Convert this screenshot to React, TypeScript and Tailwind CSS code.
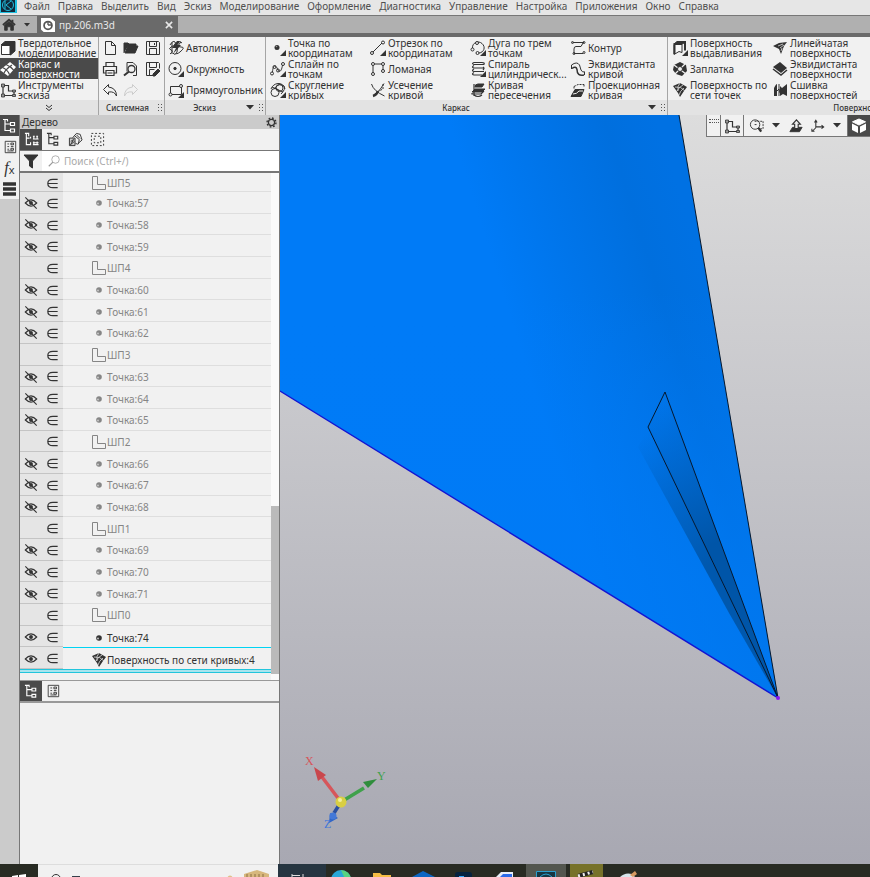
import type { ReactNode } from "react";

const menu = [
  "Файл", "Правка", "Выделить", "Вид", "Эскиз", "Моделирование", "Оформление",
  "Диагностика", "Управление", "Настройка", "Приложения", "Окно", "Справка",
];

function Icon({ children, size = 16, className = "" }: { children: ReactNode; size?: number; className?: string }) {
  return (
    <svg width={size} height={size} viewBox="0 0 16 16" fill="none" stroke="currentColor" strokeWidth="1" className={`shrink-0 ${className}`} aria-hidden="true">
      {children}
    </svg>
  );
}

const corner = <path d="M16 10v6h-6z" fill="currentColor" stroke="none" />;
const caret = (
  <svg width="9" height="5" viewBox="0 0 9 5" className="shrink-0" aria-hidden="true">
    <path d="M0 0h8L4 4.500z" fill="#333" />
  </svg>
);

const icons: Record<string, ReactNode> = {
  solid: (
    <>
      <path d="M1.500 5.500h8.500v9H1.500z" fill="#fff" />
      <path d="M1 5l4-3.500h10L11 5zM10.500 5l4.500-3.500V11l-4.500 4z" fill="currentColor" />
    </>
  ),
  frame: (
    <>
      <path d="M10 1l6 5-8 9-8-6z" fill="currentColor" stroke="none" />
      <path d="M6 3.500q5 2 8 6M2.500 6.500q5 2 7 7M4 12q2-4 8-8" stroke="#4a4a4a" strokeWidth="1.200" />
    </>
  ),
  sketch: (
    <>
      <path d="M3 3v10.500h11V9H8.500V3.500H3" strokeWidth="1.200" />
      <path d="M1.500 2h3v3h-3zM1.500 12h3v3h-3zM12.500 8h3v2h-3zM12.500 12.500h3v2h-3z" fill="#999" strokeWidth=".8" />
    </>
  ),
  auto: (
    <>
      <path d="M2 5q3-5 5-3T3 7q-3 2 0 3t-1 4M13 2q-5 5 0 5t-1 5q-4 3-4 1M4 2v12" />
      <path d="M5 13q2 3 4-1l1-9q2-3 4 0" />
      <path d="M9 1L4 8h4l-3 6 8-9H9l3-4z" fill="currentColor" stroke="none" />
    </>
  ),
  circle: (
    <>
      <circle cx="7" cy="7.500" r="6" />
      <circle cx="7" cy="7.500" r="1.200" fill="currentColor" />
      {corner}
    </>
  ),
  rect: (
    <>
      <path d="M2.500 4.500h11v8h-11z" />
      <circle cx="2.500" cy="12.500" r="1.500" fill="#f1f1f1" />
      <circle cx="13" cy="4" r="1.500" fill="#f1f1f1" />
      {corner}
    </>
  ),
  point: (
    <>
      <circle cx="7" cy="7.500" r="2.500" fill="currentColor" stroke="none" />
      <circle cx="6.500" cy="6.500" r=".8" fill="#999" stroke="none" />
      {corner}
    </>
  ),
  segment: (
    <>
      <path d="M3 12L12 3" />
      <circle cx="2" cy="13" r="1.500" />
      <circle cx="13" cy="2.500" r="1.500" />
      {corner}
    </>
  ),
  arc: (
    <>
      <path d="M2.500 8C2 3 8 0 12 3.500s2 9-3 9.500" />
      <circle cx="2.500" cy="9.500" r="1.500" />
      <circle cx="7" cy="3" r="1.500" fill="#f1f1f1" />
      <circle cx="7.500" cy="13" r="1.500" />
      {corner}
    </>
  ),
  spline: (
    <>
      <path d="M2.500 11C3 3 6 4 7.500 8s4 3 5-4" />
      <circle cx="2" cy="12.500" r="1.500" />
      <circle cx="4.500" cy="6" r="1.500" />
      <circle cx="8" cy="9.500" r="1.500" />
      <circle cx="13" cy="3" r="1.500" />
      {corner}
    </>
  ),
  poly: (
    <>
      <path d="M3 12V3h10v6" />
      <circle cx="3" cy="13" r="1.500" />
      <circle cx="3" cy="3" r="1.500" fill="#f1f1f1" />
      <circle cx="13" cy="3" r="1.500" fill="#f1f1f1" />
      <circle cx="13" cy="10" r="1.500" />
    </>
  ),
  helix: (
    <>
      <path d="M14 3.500H4q-3-1 0-2h8q3 0 2 2M14 7H4q-3-1 0-2.500M14 10.500H4q-3-1 0-2.500M12 14H4q-3-1 0-2.500M13 6q2 1 0 3" strokeWidth="1.200" />
      {corner}
    </>
  ),
  fillet: (
    <>
      <path d="M1 7q2-5 7-5.500T15 7M4 7q5-7 10-3 2 3-3 8M2 5l11 5" />
      <circle cx="5" cy="10.500" r="4" />
      <circle cx="9.500" cy="6" r="3.500" />
      {corner}
    </>
  ),
  trim: (
    <>
      <path d="M1.500 2q2 7 13 12M14 1.500Q11 8 4 13" />
      <path d="M3 14q4-1 5-5" strokeWidth="2.500" />
      <path d="M13 2v5l-4 2" strokeDasharray="2 1" />
    </>
  ),
  intersect: (
    <>
      <path d="M5 5q0-3 3-3h6l-2 3zM2 10l3-3h10l-3 3z" fill="currentColor" />
      <path d="M2 11v1h9l3-3M4 13q4 3 8 0M4 2v12" strokeWidth="1.200" />
    </>
  ),
  contour: (
    <>
      <path d="M14 2.500H2.500M13 3l-2 3.500H6q-2 0-2 2.500v4.500h9" />
      <circle cx="2.500" cy="2.500" r="1" />
      <circle cx="14" cy="2.500" r="1" />
      <circle cx="4" cy="13.500" r="1" />
      <circle cx="14" cy="12.500" r="1" />
    </>
  ),
  offset: (
    <>
      <path d="M1.500 4Q7 0 9.500 4L11 9q1 2.500 4 2" />
      <path d="M2 7.500q4-3 5 1 0 7 7 5.500" strokeWidth="1.500" />
      <path d="M1.500 4v4M14.500 11v3" />
    </>
  ),
  project: (
    <>
      <path d="M5 7.500h9l-3 7H1z" fill="currentColor" />
      <path d="M4 4.500l4-2h6M4 4.500v2M14 2.500v3" strokeDasharray="2 1" />
      <path d="M3 12q4 0 6-3h4" stroke="#eee" />
    </>
  ),
  extrude: (
    <>
      <path d="M2 4.500h8v8l-3-1-5 3z" fill="#f8f8f8" />
      <path d="M2 4l3-2.500h9L10.500 4z" fill="currentColor" />
      <path d="M2.500 3v11M13 2v8.500" strokeWidth="2" />
      {corner}
    </>
  ),
  patch: (
    <>
      <path d="M8 1l6 3 1 6-5 5-6-2-3-4 1-5z" fill="currentColor" stroke="none" />
      <path d="M2 4l12 9M13 3L3 13" stroke="#eee" strokeWidth="1.300" />
      <circle cx="8" cy="8" r="2.500" fill="#f1f1f1" />
    </>
  ),
  net: (
    <>
      <path d="M1 4l7-3 7 4-3 4-4 6-2-4z" fill="currentColor" stroke="none" />
      <path d="M3 5q6-1 10 4M5 9q2-4 6-6M7 13q1-4 5-7M8 1q-3 3-2 8" stroke="#ddd" strokeWidth=".8" />
    </>
  ),
  ruled: (
    <>
      <path d="M1 6l6-3 8-1-3 4-3 8-2-5z" fill="currentColor" stroke="none" />
      <path d="M6 6l5-2M8 8l4-3M9 11l1-3" stroke="#ddd" strokeWidth=".8" />
    </>
  ),
  eqsurf: (
    <>
      <path d="M1 6l7-5 7 6-6 5z" fill="currentColor" stroke="none" />
      <path d="M1 8l8 6 6-5" strokeWidth="1.500" />
    </>
  ),
  sew: (
    <>
      <path d="M8 4l2 2 5-4v12l-4-2-3 2zM2 6q2-4 3-4v12H2z" fill="currentColor" stroke="none" />
      <path d="M5 9l2-2 1 4M7 2v12" />
    </>
  ),
  file: <path d="M3.500 1.500h6l4 4v9h-10zM9.500 1.500v4h4" />,
  open: <path d="M1 13V3h4l1 1h7v2H5l-3 7h10l3-7H5" fill="currentColor" />,
  save: <path d="M1.500 1.500h12l1 1v12h-13zM4.500 1.500v5h7v-5M4.500 14.500v-6h7v6M9.500 3v2" />,
  print: <path d="M4 5.500v-4h8v4M4 12H1.500V5.500h13V12H12M4 9.500h8v5H4zM5.500 12h5" strokeWidth="1.200" />,
  preview: (
    <>
      <path d="M4 10.500v-9h6l3.500 3.500v9.500H10" />
      <circle cx="8.500" cy="8" r="3.500" fill="#f1f1f1" strokeWidth="1.300" />
      <path d="M6 10.500l-5 4" strokeWidth="2" />
    </>
  ),
  saveas: (
    <>
      <path d="M1.500 1.500h12l1 1v5M8 14.500H1.500v-13M4.500 1.500v5h7v-5M4.500 14.500v-6h5" />
      <path d="M8 13l5-5 2 2-5 5H8z" fill="currentColor" />
    </>
  ),
  undo: <path d="M6.500 2.500L1.500 7.500l5 5V10q6-1 8 4 0-8-8-9z" />,
  redo: <path d="M9.500 2.500l5 5-5 5V10q-6-1-8 4 0-8 8-9z" stroke="#ccc" />,
  tree: <path d="M3 1v12M1 1.500h5M3 6h5M3 12.500h5M8.500 4.500h4v3h-4zM8.500 11h4v3h-4zM5.500 2v1.500" strokeWidth="1.200" />,
  treeNum: <path d="M2.500 1v13M1 1.500h4v3M3 6.500h3M3 13.500h4M7 5v2M7 11v3M10.500 4v4M14 4v4M9.500 4.500h2M13 4.500h2M9.500 7.500h6M10.500 10v4M14 10v4M9.500 11.500h6M9.500 13.500h6" strokeWidth="1.200" />,
  list: <path d="M2.500 1.500h12v13h-12zM5 4.500h2M9 3.500h3v2H9zM5 7.500h2M9 7.500h3M5 10.500h2M9 9.500h3v2H9zM5 12.500h7" />,
  copyset: (
    <>
      <path d="M5 6l4-4.500 4 1 2 6-5 4.500-2-1M7 4l5 4-1 5M9 3l4 4" />
      <path d="M1.500 6.500h6v8h-6z" fill="#ccc" />
      <path d="M3 10l3-2M3 13l3-5M2 14l5-4" />
    </>
  ),
  dotted: (
    <>
      <path d="M1.500 1.500h13v13h-13z" strokeDasharray="2 2" />
      <path d="M4.500 4.500h7v7h-7z" strokeDasharray="2 2" />
    </>
  ),
  gear: (
    <>
      <circle cx="8" cy="8" r="4.500" strokeWidth="1.800" />
      <circle cx="8" cy="8" r="6.500" strokeWidth="2" strokeDasharray="2.500 2.600" />
    </>
  ),
  corner2: <path d="M1.500 1.500h5v8h8v5h-13z" />,
  elem: <path d="M13.500 3.500H8.500q-5.500 0-5.500 4.500t5.500 4.500h5M3 8h10.500" strokeWidth="1.300" />,
  eye: (
    <>
      <path d="M1.500 8q6.500-7 13 0-6.500 7-13 0z" strokeWidth="1.300" />
      <circle cx="8" cy="8" r="2.200" fill="currentColor" stroke="none" />
    </>
  ),
  eyeOff: (
    <>
      <path d="M1.500 8q6.500-7 13 0-6.500 7-13 0zM1.500 1.500l13 13" strokeWidth="1.300" />
      <circle cx="8" cy="8" r="2.200" fill="currentColor" stroke="none" />
    </>
  ),
  dot: (
    <>
      <circle cx="8" cy="8" r="2.800" fill="currentColor" stroke="none" />
      <circle cx="7" cy="8.500" r=".9" fill="#ccc" stroke="none" />
    </>
  ),
  zoomArea: (
    <>
      <circle cx="6.500" cy="7" r="5" />
      <path d="M10 10.500l3 4" strokeWidth="2.500" />
      <path d="M6 3.500h9v8h-4M6 7h3" strokeDasharray="2 1" />
    </>
  ),
  normal: (
    <>
      <path d="M4 9.500h11l-3 5H1z" fill="currentColor" />
      <path d="M6.500 11V6H4l4.500-5L13 6h-2.500v5z" fill="#eee" strokeWidth="1.300" />
    </>
  ),
  axes: <path d="M5.500 10V2M4 4l1.500-2.500L7 4M5.500 10l-4 4M1 11v3h3M5.500 9H14M12 7l2.500 2-2.500 2" strokeWidth="1.200" />,
  cube: (
    <>
      <path d="M8 1l6.500 2.800L8 7 1.500 3.800z" fill="currentColor" />
      <path d="M1 5.500l6 3v6.500l-6-3zM15 5.500l-6 3v6.500l6-3z" fill="currentColor" stroke="none" />
    </>
  ),
};

type Tool = { icon: string; text: string; active?: boolean };

const modes: Tool[] = [
  { icon: "solid", text: "Твердотельное моделирование" },
  { icon: "frame", text: "Каркас и поверхности", active: true },
  { icon: "sketch", text: "Инструменты эскиза" },
];
const sketchTools: Tool[] = [
  { icon: "auto", text: "Автолиния" },
  { icon: "circle", text: "Окружность" },
  { icon: "rect", text: "Прямоугольник" },
];
const frameTools: Tool[] = [
  { icon: "point", text: "Точка по координатам" },
  { icon: "segment", text: "Отрезок по координатам" },
  { icon: "arc", text: "Дуга по трем точкам" },
  { icon: "contour", text: "Контур" },
  { icon: "spline", text: "Сплайн по точкам" },
  { icon: "poly", text: "Ломаная" },
  { icon: "helix", text: "Спираль цилиндрическ..." },
  { icon: "offset", text: "Эквидистанта кривой" },
  { icon: "fillet", text: "Скругление кривых" },
  { icon: "trim", text: "Усечение кривой" },
  { icon: "intersect", text: "Кривая пересечения" },
  { icon: "project", text: "Проекционная кривая" },
];
const surfaceTools: Tool[] = [
  { icon: "extrude", text: "Поверхность выдавливания" },
  { icon: "ruled", text: "Линейчатая поверхность" },
  { icon: "patch", text: "Заплатка" },
  { icon: "eqsurf", text: "Эквидистанта поверхности" },
  { icon: "net", text: "Поверхность по сети\u00a0точек" },
  { icon: "sew", text: "Сшивка поверхностей" },
];

function Lines({ text }: { text: string }) {
  const at = text.lastIndexOf(" ");
  if (at < 0) return <>{text}</>;
  return <>{text.slice(0, at)}<br />{text.slice(at + 1)}</>;
}

function ToolButton({ tool }: { tool: Tool }) {
  return (
    <button
      type="button"
      className={`flex h-[21px] min-w-0 items-center gap-0.5 text-left text-[10px] leading-[10px] ${tool.active ? "bg-[#4a4a4a] text-white" : ""}`}
    >
      <Icon>{icons[tool.icon]}</Icon>
      <span className="whitespace-nowrap"><Lines text={tool.text} /></span>
    </button>
  );
}

function Grip() {
  return (
    <span className="grid grid-cols-2 gap-0.5" aria-hidden="true">
      {[0, 1, 2, 3, 4, 5].map((n) => <i key={n} className="size-px bg-[#555]" />)}
    </span>
  );
}

function Group({ label, className, children, drop }: { label: string; className: string; children: ReactNode; drop?: boolean }) {
  return (
    <section className={`flex flex-col border-r border-[#a5a5a5] ${className}`}>
      <div className="h-[63px]">{children}</div>
      <footer className="flex h-[15px] items-center gap-1 bg-[#e3e3e3] px-0.5 text-[8px] font-medium">
        <span className="flex-1 text-center">{label}</span>
        {drop && caret}
        <Grip />
      </footer>
    </section>
  );
}

function Ribbon() {
  return (
    <div className="flex h-[78px] shrink-0 overflow-hidden bg-[#f1f1f1]">
      <section className="flex w-[99px] shrink-0 flex-col border-r border-[#a5a5a5]">
        {modes.map((t) => <ToolButton key={t.text} tool={t} />)}
        <button type="button" aria-label="Ещё" className="flex h-[15px] items-center justify-center bg-[#e3e3e3]">
          <Icon size={8}><path d="M2 2l6 5 6-5M2 8l6 5 6-5" strokeWidth="2" /></Icon>
        </button>
      </section>
      <Group label="Системная" className="w-[66px] shrink-0">
        <div className="grid grid-cols-3">
          {["file", "open", "save", "print", "preview", "saveas", "undo", "redo"].map((n) => (
            <button key={n} type="button" aria-label={n} className="flex h-[21px] items-center justify-center">
              <Icon>{icons[n]}</Icon>
            </button>
          ))}
        </div>
      </Group>
      <Group label="Эскиз" drop className="w-[101px] shrink-0">
        <div className="grid pl-[3px]">{sketchTools.map((t) => <ToolButton key={t.text} tool={t} />)}</div>
      </Group>
      <Group label="Каркас" drop className="w-[402px] shrink-0">
        <div className="grid grid-cols-[repeat(4,100px)] pl-1">{frameTools.map((t) => <ToolButton key={t.text} tool={t} />)}</div>
      </Group>
      <section className="flex flex-1 flex-col">
        <div className="grid h-[63px] grid-cols-[repeat(2,100px)] pl-1">{surfaceTools.map((t) => <ToolButton key={t.text} tool={t} />)}</div>
        <footer className="flex h-[15px] items-center justify-end bg-[#e3e3e3] text-[8px] font-medium">Поверхно</footer>
      </section>
    </div>
  );
}

type Row = { name: string; kind: "sketch" | "point" | "surface"; shown?: boolean };

const rows: Row[] = [5, 4, 3, 2, 1].flatMap((n) => {
  const first = 57 + (5 - n) * 3;
  return [
    { name: `ШП${n}`, kind: "sketch" } as Row,
    ...[0, 1, 2].map((k) => ({ name: `Точка:${first + k}`, kind: "point" }) as Row),
  ];
});
rows.push(
  { name: "ШП0", kind: "sketch" },
  { name: "Точка:74", kind: "point", shown: true },
  { name: "Поверхность по сети кривых:4", kind: "surface", shown: true },
);

function TreeRow({ row, first }: { row: Row; first: boolean }) {
  const glyph = row.kind === "sketch" ? "corner2" : row.kind === "point" ? "dot" : "net";
  const color = row.shown ? "text-[#333]" : "text-[#858585]";
  const line = row.kind === "surface" ? "border-t border-t-cyan-400" : row.shown ? "" : "border-b border-b-[#dedede]";
  return (
    <li className={`flex min-h-0 ${first ? "h-[19px] shrink-0" : "flex-1"}`}>
      <div className="flex w-[43px] items-center justify-around border-b border-[#c4c4c4] bg-[#e5e5e5] pt-0.5">
        <span className="size-[14px]">
          {row.kind !== "sketch" && <Icon size={14}>{icons[row.shown ? "eye" : "eyeOff"]}</Icon>}
        </span>
        <Icon size={15}>{icons.elem}</Icon>
      </div>
      <div className={`flex flex-1 items-center pt-0.5 pl-7 ${line} ${color}`}>
        <Icon>{icons[glyph]}</Icon>
        <span className="whitespace-nowrap text-[10px] leading-3">{row.name}</span>
      </div>
    </li>
  );
}

function Rail() {
  return (
    <nav className="flex w-5 shrink-0 flex-col border-r border-[#777] bg-[#cbcbcb]">
      <button type="button" aria-label="Дерево" className="flex h-[21px] items-center justify-center bg-[#4a4a4a] text-white">
        <Icon>{icons.tree}</Icon>
      </button>
      <button type="button" aria-label="Параметры" className="flex h-[21px] items-center justify-center bg-[#f1f1f1]">
        <Icon size={14}>{icons.list}</Icon>
      </button>
      <button type="button" className="flex h-[21px] items-center justify-center bg-[#f1f1f1] leading-4">
        <span className="font-['Liberation_Serif',serif] text-base italic">f</span>
        <span className="pt-1 text-[11px]">x</span>
      </button>
      <button type="button" aria-label="Слои" className="flex h-[21px] items-center justify-center bg-[#f1f1f1]">
        <Icon><path d="M1 3h13M1 8h13M1 13h13" strokeWidth="3.500" /></Icon>
      </button>
    </nav>
  );
}

function TreePanel() {
  return (
    <aside className="flex w-[260px] shrink-0 flex-col border-r border-[#777] bg-[#f1f1f1]">
      <header className="flex h-[14px] items-center justify-between bg-[#cbcbcb] px-0.5 text-[10px] leading-3">
        Дерево
        <button type="button" aria-label="Настройки"><Icon size={11}>{icons.gear}</Icon></button>
      </header>
      <div className="flex h-[22px] border-b border-[#777]">
        {["treeNum", "tree", "copyset", "dotted"].map((n) => (
          <button key={n} type="button" aria-label={n} className={`flex w-[22px] items-center justify-center ${n === "treeNum" ? "bg-[#4a4a4a] text-white" : ""}`}>
            <Icon size={15}>{icons[n]}</Icon>
          </button>
        ))}
      </div>
      <div className="flex h-[22px] items-center border-b-2 border-[#777] bg-white">
        <button type="button" aria-label="Фильтр" className="flex h-full w-[22px] items-center justify-center bg-[#f1f1f1]">
          <Icon><path d="M1 2h14L9.500 8v7l-3-2V8z" fill="currentColor" /></Icon>
        </button>
        <label htmlFor="tree-search" aria-label="Поиск" className="ml-1.5 text-[#999]">
          <Icon size={12}><circle cx="10" cy="6" r="5" /><path d="M6.500 9.500L1 15" strokeWidth="1.500" /></Icon>
        </label>
        <input id="tree-search" type="text" placeholder="Поиск (Ctrl+/)" className="ml-1 w-40 bg-transparent text-[10px] outline-none placeholder:text-[#aaa]" />
      </div>
      <div className="flex min-h-0 flex-1 border-b border-[#999]">
        <div className="flex min-h-0 flex-1 flex-col">
          <ul className="flex min-h-0 flex-1 flex-col">
            {rows.map((row, i) => <TreeRow key={row.name} row={row} first={i === 0} />)}
          </ul>
          <div className="h-1 border-y border-[#22c5dc] bg-[#a9e4ee]" />
          <div className="h-[7px]" />
        </div>
        <div className="flex w-2 flex-col bg-[#fafafa]">
          <div className="flex-[333]" />
          <div className="mb-1.5 flex-[168] bg-[#bababa]" />
        </div>
      </div>
      <div className="h-[183px] shrink-0">
        <div className="flex h-[22px] border-b-2 border-[#999]">
          <button type="button" aria-label="Дерево модели" className="flex w-[22px] items-center justify-center bg-[#4a4a4a] text-white">
            <Icon size={15}>{icons.tree}</Icon>
          </button>
          <button type="button" aria-label="Свойства" className="flex w-[22px] items-center justify-center">
            <Icon size={14}>{icons.list}</Icon>
          </button>
        </div>
      </div>
    </aside>
  );
}

function Model() {
  return (
    <svg viewBox="0 0 590 749" preserveAspectRatio="xMinYMin slice" className="block size-full" role="img" aria-label="Модель">
      <defs>
        <linearGradient id="face" gradientUnits="userSpaceOnUse" x1="220" y1="170" x2="410" y2="110">
          <stop offset="0" stopColor="#007bf7" />
          <stop offset=".75" stopColor="#006fde" />
          <stop offset="1" stopColor="#0071e3" />
        </linearGradient>
        <linearGradient id="lower" x1="0" y1="0" x2="0" y2="1">
          <stop offset=".3" stopColor="#007bf7" stopOpacity="0" />
          <stop offset=".8" stopColor="#007af5" stopOpacity=".7" />
        </linearGradient>
        <linearGradient id="fin" gradientUnits="userSpaceOnUse" x1="376" y1="290" x2="430" y2="430">
          <stop offset="0" stopColor="#0055a8" stopOpacity="0" />
          <stop offset="1" stopColor="#0055a8" />
        </linearGradient>
        <linearGradient id="finSide" gradientUnits="userSpaceOnUse" x1="356" y1="325" x2="430" y2="450">
          <stop offset="0" stopColor="#0055a8" stopOpacity="0" />
          <stop offset="1" stopColor="#0058ae" />
        </linearGradient>
      </defs>
      <path d="M0 0h399l99 583L0 276z" fill="url(#face)" />
      <path d="M0 0h399l99 583L0 276z" fill="url(#lower)" />
      <path d="M368 312l-10 20 91 166 49 85z" fill="url(#finSide)" />
      <path d="M385 277l-17 35 130 271z" fill="url(#fin)" />
      <path d="M399 0l99 583L385 277l-17 35 130 271" fill="none" stroke="#07182c" strokeWidth="1" />
      <path d="M0 276l498 307" stroke="#1414d2" strokeWidth="1.400" />
      <circle cx="498" cy="583" r="2" fill="#8a18f0" />
      <g strokeWidth="3.500">
        <path d="M61 687L42 662" stroke="#d6565b" />
        <path d="M34 652l12 8-8 6z" fill="#c9474c" />
        <path d="M61 687l23-14" stroke="#3fa14b" />
        <path d="M97 664l-9 9-5-6z" fill="#2f8d3c" />
        <path d="M61 687l-7 11" stroke="#2b50a0" />
        <path d="M49 708l1-10 8 5z" fill="#2e65c8" />
        <circle cx="53" cy="701" r="3.500" fill="#4378d8" />
        <circle cx="61" cy="687" r="5.500" fill="#d9cf43" />
        <circle cx="60" cy="685" r="2" fill="#f3efa0" />
      </g>
      <g className="font-['Liberation_Serif',serif] text-[12px]">
        <text x="25" y="650" fill="#d6565b">X</text>
        <text x="97" y="665" fill="#3fa14b">Y</text>
        <text x="44" y="713" fill="#4378d8">Z</text>
      </g>
    </svg>
  );
}

function Viewport() {
  return (
    <main className="relative min-w-0 flex-1 overflow-hidden bg-linear-to-b from-[#dddddd] to-[#a8a8b2]">
      <Model />
      <div className="absolute top-0 right-0 flex h-[22px] border-b border-l border-[#777] bg-[#f1f1f1]">
        <span className="flex w-[14px] justify-center border-r border-[#777] pt-1" aria-hidden="true">
          <i className="h-1 w-2.5 border-y border-dotted border-[#555]" />
        </span>
        <button type="button" aria-label="Эскиз" className="flex w-[23px] items-center justify-center border-r border-[#777]"><Icon>{icons.sketch}</Icon></button>
        <span className="flex items-center gap-2 border-r border-[#777] px-[5px]">
          <button type="button" aria-label="Масштаб" className="flex items-center gap-2"><Icon size={15}>{icons.zoomArea}</Icon>{caret}</button>
          <button type="button" aria-label="Нормально к"><Icon size={14}>{icons.normal}</Icon></button>
          <button type="button" aria-label="Ориентация" className="flex items-center gap-2"><Icon size={14}>{icons.axes}</Icon>{caret}</button>
        </span>
        <button type="button" aria-label="Отображение" className="flex w-[22px] items-center justify-center bg-[#4a4a4a] text-white"><Icon>{icons.cube}</Icon></button>
      </div>
    </main>
  );
}

function Taskbar() {
  return (
    <footer className="flex h-[13px] shrink-0 overflow-hidden bg-[#282b23]">
      <button type="button" aria-label="Пуск" className="flex w-[38px] shrink-0 justify-center pt-2.5">
        <svg width="14" height="14" viewBox="0 0 14 14" fill="#fff"><path d="M0 2l6-1v5H0zM7 1l7-1v6H7zM0 7h6v6l-6-1z" /></svg>
      </button>
      <div className="w-60 shrink-0 border-t border-[#ddd] bg-[#f1f1f1]">
        <svg width="240" height="12" viewBox="0 0 240 12" fill="none" aria-hidden="true">
          <circle cx="18" cy="14" r="4.500" stroke="#333" />
          <path d="M34 12h8" stroke="#34404a" strokeWidth="2" />
          <path d="M206 9l13-4 12 4v3h-25z" fill="#d7b77d" />
          <path d="M209 9v3M213 9v3M217 9v3M221 9v3M225 9v3" stroke="#8c6f45" />
          <circle cx="192" cy="13" r="2.500" fill="#dfc08b" />
        </svg>
      </div>
      <svg width="592" height="13" viewBox="278 0 592 13" className="shrink-0" aria-hidden="true">
        <path d="M278 0h48v13h-48z" fill="#263541" />
        <path d="M292 10v3M292 11.500h8M303 10v3" stroke="#ddd" fill="none" />
        <circle cx="341" cy="16" r="10" fill="#28a7d8" />
        <path d="M341 6a10 10 0 0 1 10 9h-6z" fill="#56d481" />
        <path d="M373 9h7l2 2h9v2h-18z" fill="#f5bd45" />
        <path d="M412 13l11-6 12 6z" fill="#0b66c3" />
        <rect x="455" y="8" width="17" height="8" rx="3" fill="#06223f" />
        <path d="M459 13h5" stroke="#31a8ff" strokeWidth="2" />
        <path d="M496 13l5-5h12v5z" fill="#e8eef8" />
        <path d="M500 13l3-3h9v3z" fill="#2b6bea" />
        <path d="M526 0h40v13h-40z" fill="#53564f" />
        <path d="M536.500 13V7.500h19V13" fill="#173642" stroke="#2b9fd0" />
        <path d="M540 13q6-6 12 0" stroke="#2b9fd0" fill="none" />
        <path d="M570 0h33v13h-33z" fill="#77722a" />
        <path d="M578 12l15-4" stroke="#222" strokeWidth="4" />
        <path d="M578 12l15-4" stroke="#eee" strokeWidth="3" strokeDasharray="2 3" />
        <path d="M620 13q5-5 12-3l3 3z" fill="#d7e5eb" />
        <path d="M630 11l5-4 2 3-4 3z" fill="#d79a61" />
      </svg>
    </footer>
  );
}

export default function App() {
  return (
    <div className="flex h-screen flex-col overflow-hidden bg-[#cbcbcb] font-['Noto_Sans','Open_Sans',sans-serif] text-[#333]">
      <nav className="flex h-4 shrink-0 border-b border-[#777] bg-[#e6e6e6]">
        <svg width="17" height="13" viewBox="0 0 17 13" className="shrink-0" aria-hidden="true">
          <path d="M0 0h17v13H0z" fill="#20bfe0" />
          <path d="M1 0h14v12H1z" fill="#10283a" />
          <circle cx="8" cy="5" r="5.500" fill="none" stroke="#20bfe0" />
          <path d="M5 1v8M11 1L6 5l5 4" fill="none" stroke="#20bfe0" />
        </svg>
        <div className="flex gap-2 pl-[7px] text-[10px] leading-3 text-[#505050]">
          {menu.map((m) => <button key={m} type="button" className="h-3 whitespace-nowrap">{m}</button>)}
        </div>
      </nav>
      <div className="flex h-[21px] shrink-0 border-b-4 border-[#6a6a6a] bg-[#b0b0b0]">
        <button type="button" aria-label="Главная" className="flex w-[37px] items-center gap-2 pl-0.5">
          <Icon size={14}><path d="M1 8l7-6 7 6M12 2v4" strokeWidth="2" /><path d="M3 8l5-4 5 4v6h-3v-4H6v4H3z" fill="currentColor" /></Icon>
          <svg width="7" height="4" viewBox="0 0 7 4" aria-hidden="true"><path d="M0 0h6L3 3.500z" fill="#333" /></svg>
        </button>
        <div className="flex w-[141px] items-center gap-1 bg-[#6a6a6a] px-1 text-[10px] leading-4 text-[#e8e8e8]">
          <Icon size={14}>
            <path d="M2 0h9l5 4v12H3L0 13V0z" fill="#fff" stroke="none" />
            <circle cx="8" cy="8.500" r="4.500" stroke="#555" strokeWidth="2" />
            <path d="M8 8V4M8 8h4" stroke="#555" strokeWidth="1.500" />
          </Icon>
          <span className="flex-1">пр.206.m3d</span>
          <button type="button" aria-label="Закрыть"><Icon size={10}><path d="M3 3l10 10M13 3L3 13" strokeWidth="2.500" /></Icon></button>
        </div>
      </div>
      <Ribbon />
      <div className="flex min-h-0 flex-1">
        <Rail />
        <TreePanel />
        <Viewport />
      </div>
      <Taskbar />
    </div>
  );
}
